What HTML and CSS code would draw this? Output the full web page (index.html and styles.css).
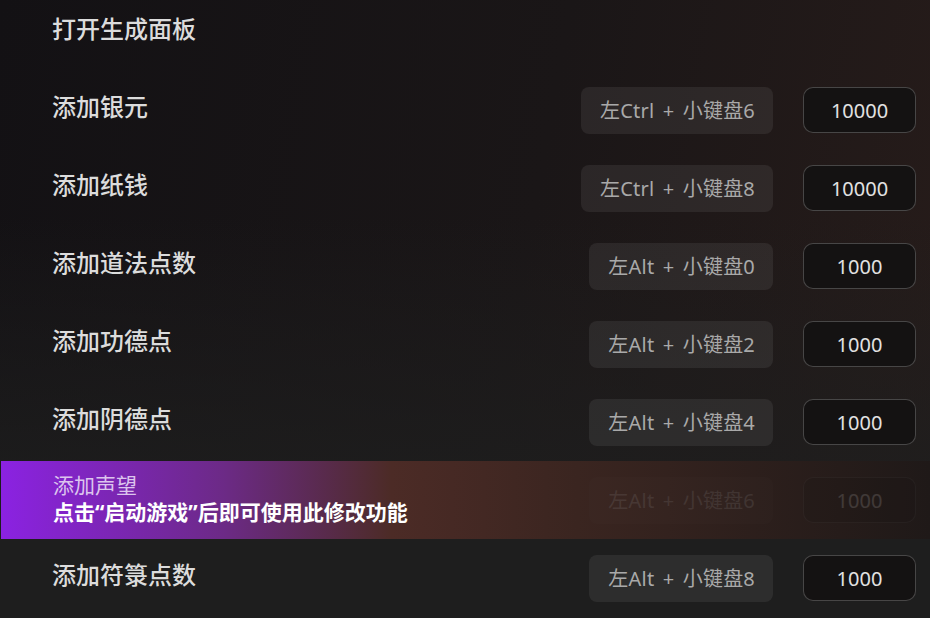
FILE: index.html
```html
<!DOCTYPE html>
<html>
<head>
    <title>修改面板</title>
    <link rel="stylesheet" href="styles.css">
</head>
<body>
    <div class="list">
        <div class="row">
            <div class="label">打开生成面板</div>
        </div>
        <div class="row">
            <div class="label">添加银元</div>
            <div class="controls">
                <div class="hotkey">左Ctrl + 小键盘6</div>
                <input class="amount" type="text" value="10000">
            </div>
        </div>
        <div class="row">
            <div class="label">添加纸钱</div>
            <div class="controls">
                <div class="hotkey">左Ctrl + 小键盘8</div>
                <input class="amount" type="text" value="10000">
            </div>
        </div>
        <div class="row">
            <div class="label">添加道法点数</div>
            <div class="controls">
                <div class="hotkey">左Alt + 小键盘0</div>
                <input class="amount" type="text" value="1000">
            </div>
        </div>
        <div class="row">
            <div class="label">添加功德点</div>
            <div class="controls">
                <div class="hotkey">左Alt + 小键盘2</div>
                <input class="amount" type="text" value="1000">
            </div>
        </div>
        <div class="row">
            <div class="label">添加阴德点</div>
            <div class="controls">
                <div class="hotkey">左Alt + 小键盘4</div>
                <input class="amount" type="text" value="1000">
            </div>
        </div>
        <div class="row locked">
            <div class="label">
                <div class="label-name">添加声望</div>
                <div class="label-tip">点击“启动游戏”后即可使用此修改功能</div>
            </div>
            <div class="controls">
                <div class="hotkey">左Alt + 小键盘6</div>
                <input class="amount" type="text" value="1000">
            </div>
        </div>
        <div class="row">
            <div class="label">添加符箓点数</div>
            <div class="controls">
                <div class="hotkey">左Alt + 小键盘8</div>
                <input class="amount" type="text" value="1000">
            </div>
        </div>
    </div>
</body>
</html>
```

FILE: styles.css
```css
html, body {
    height: 100%;
}
body {
    margin: 0;
    overflow: hidden;
    font-family: "Noto Sans", "Noto Sans CJK SC", sans-serif;
    color: #d9d9d9;
    background:
        linear-gradient(to bottom, rgba(30, 30, 30, 0) 35%, #1e1e1e 85%),
        linear-gradient(100deg, #131114 0%, #1a1617 55%, #271c1a 100%);
    background-color: #1e1e1e;
}
.list {
    margin-top: -7px;
    display: flex;
    flex-direction: column;
}
.row {
    height: 78px;
    display: flex;
    align-items: center;
    justify-content: space-between;
    padding: 0 14px 0 52px;
}
.label {
    font-size: 24px;
    font-weight: 500;
    line-height: 32px;
    padding-bottom: 7px;
    color: #dcdcdc;
}
.controls {
    display: flex;
    align-items: center;
    gap: 30px;
}
.hotkey {
    height: 47px;
    line-height: 47px;
    padding: 0 18px 0 19px;
    border-radius: 8px;
    background-color: rgba(255, 255, 255, 0.07);
    color: #a9a9a9;
    font-size: 20px;
    word-spacing: 3px;
    letter-spacing: 0.2px;
}
.amount {
    width: 111px;
    height: 44px;
    box-sizing: content-box;
    padding: 0;
    border: 1px solid rgba(255, 255, 255, 0.22);
    border-radius: 10px;
    background-color: #141212;
    color: #e2e2e2;
    font-family: "Noto Sans", "Noto Sans CJK SC", sans-serif;
    font-size: 20px;
    text-align: center;
    outline: none;
}
.locked {
    margin-left: 1px;
    background: linear-gradient(to right, #8b22e2 0%, #6c2a86 24%, #4c2b26 42%, #3a2520 62%, #1f1918 100%);
}
.locked .label {
    padding-bottom: 2px;
}
.locked .controls {
    opacity: 0.15;
}
.locked .label-name {
    font-size: 21px;
    font-weight: 400;
    color: #dcc4ee;
    line-height: 27px;
}
.locked .label-tip {
    font-size: 21px;
    font-weight: 700;
    color: #ffffff;
    line-height: 27px;
}
```
